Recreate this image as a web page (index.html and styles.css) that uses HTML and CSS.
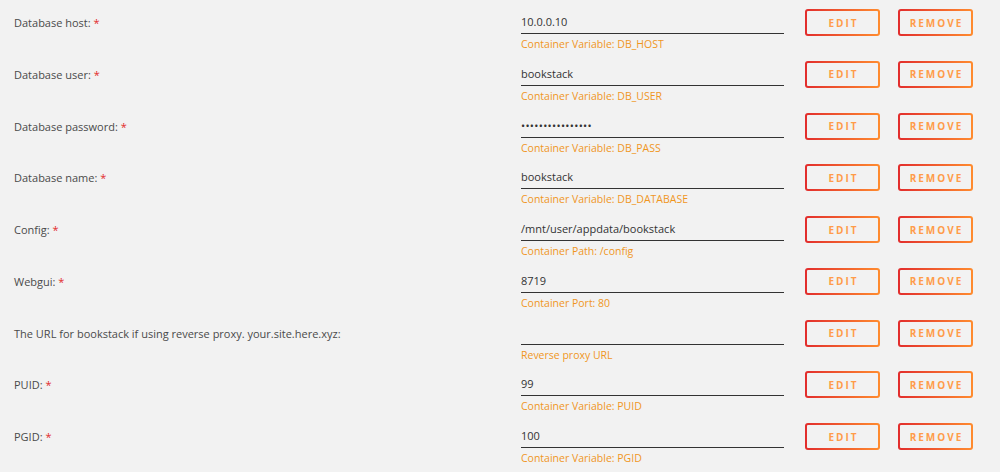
FILE: index.html
```html
<!DOCTYPE html>
<html lang="en">
<head>
  <meta charset="UTF-8">
  <title>Container settings</title>
  <link rel="stylesheet" href="styles.css">
</head>
<body>
  <div class="settings">
    <div class="row">
      <div class="label">Database host: <span class="req">*</span></div>
      <div class="field"><div class="value">10.0.0.10</div><div class="hint">Container Variable: DB_HOST</div></div>
      <button class="btn">EDIT</button>
      <button class="btn">REMOVE</button>
    </div>
    <div class="row">
      <div class="label">Database user: <span class="req">*</span></div>
      <div class="field"><div class="value">bookstack</div><div class="hint">Container Variable: DB_USER</div></div>
      <button class="btn">EDIT</button>
      <button class="btn">REMOVE</button>
    </div>
    <div class="row">
      <div class="label">Database password: <span class="req">*</span></div>
      <div class="field"><div class="value pass">••••••••••••••••</div><div class="hint">Container Variable: DB_PASS</div></div>
      <button class="btn">EDIT</button>
      <button class="btn">REMOVE</button>
    </div>
    <div class="row">
      <div class="label">Database name: <span class="req">*</span></div>
      <div class="field"><div class="value">bookstack</div><div class="hint">Container Variable: DB_DATABASE</div></div>
      <button class="btn">EDIT</button>
      <button class="btn">REMOVE</button>
    </div>
    <div class="row">
      <div class="label">Config: <span class="req">*</span></div>
      <div class="field"><div class="value">/mnt/user/appdata/bookstack</div><div class="hint">Container Path: /config</div></div>
      <button class="btn">EDIT</button>
      <button class="btn">REMOVE</button>
    </div>
    <div class="row">
      <div class="label">Webgui: <span class="req">*</span></div>
      <div class="field"><div class="value">8719</div><div class="hint">Container Port: 80</div></div>
      <button class="btn">EDIT</button>
      <button class="btn">REMOVE</button>
    </div>
    <div class="row">
      <div class="label">The URL for bookstack if using reverse proxy. your.site.here.xyz:</div>
      <div class="field"><div class="value"></div><div class="hint">Reverse proxy URL</div></div>
      <button class="btn">EDIT</button>
      <button class="btn">REMOVE</button>
    </div>
    <div class="row">
      <div class="label">PUID: <span class="req">*</span></div>
      <div class="field"><div class="value">99</div><div class="hint">Container Variable: PUID</div></div>
      <button class="btn">EDIT</button>
      <button class="btn">REMOVE</button>
    </div>
    <div class="row">
      <div class="label">PGID: <span class="req">*</span></div>
      <div class="field"><div class="value">100</div><div class="hint">Container Variable: PGID</div></div>
      <button class="btn">EDIT</button>
      <button class="btn">REMOVE</button>
    </div>
  </div>
</body>
</html>
```

FILE: styles.css
```css
html, body {
  margin: 0;
  padding: 0;
}
body {
  background: #f2f2f2;
  font-family: 'Open Sans', 'DejaVu Sans', sans-serif;
  font-size: 11px;
  color: #444;
  overflow: hidden;
}
.settings {
  display: flex;
  flex-direction: column;
}
.row {
  display: flex;
  align-items: flex-start;
  height: 51.75px;
  box-sizing: border-box;
  padding: 9px 0 0 14px;
}
.label {
  width: 507px;
  flex: none;
  line-height: 27px;
  color: #4a4a4a;
  white-space: nowrap;
}
.req {
  color: #e22b2b;
}
.field {
  width: 263px;
  flex: none;
  display: flex;
  flex-direction: column;
}
.value {
  height: 25px;
  line-height: 26px;
  color: #333;
  border-bottom: 1px solid #333;
  box-sizing: border-box;
}
.value.pass {
  letter-spacing: 0.3px;
}
.hint {
  color: #f0961e;
  font-size: 10.5px;
  line-height: 14px;
  margin-top: 3px;
}
.btn {
  width: 75px;
  height: 27px;
  flex: none;
  box-sizing: border-box;
  border: 2px solid transparent;
  border-radius: 3px;
  background: linear-gradient(#f2f2f2, #f2f2f2) padding-box,
              linear-gradient(90deg, #e22d2d 0%, #ff8c2f 100%) border-box;
  color: #ff9c4a;
  font-family: 'Open Sans', 'DejaVu Sans', sans-serif;
  font-size: 10px;
  font-weight: 700;
  letter-spacing: 2px;
  padding: 0 0 0 2px;
  cursor: pointer;
}
.btn + .btn {
  margin-left: 18px;
}
.field + .btn {
  margin-left: 21px;
}
```
